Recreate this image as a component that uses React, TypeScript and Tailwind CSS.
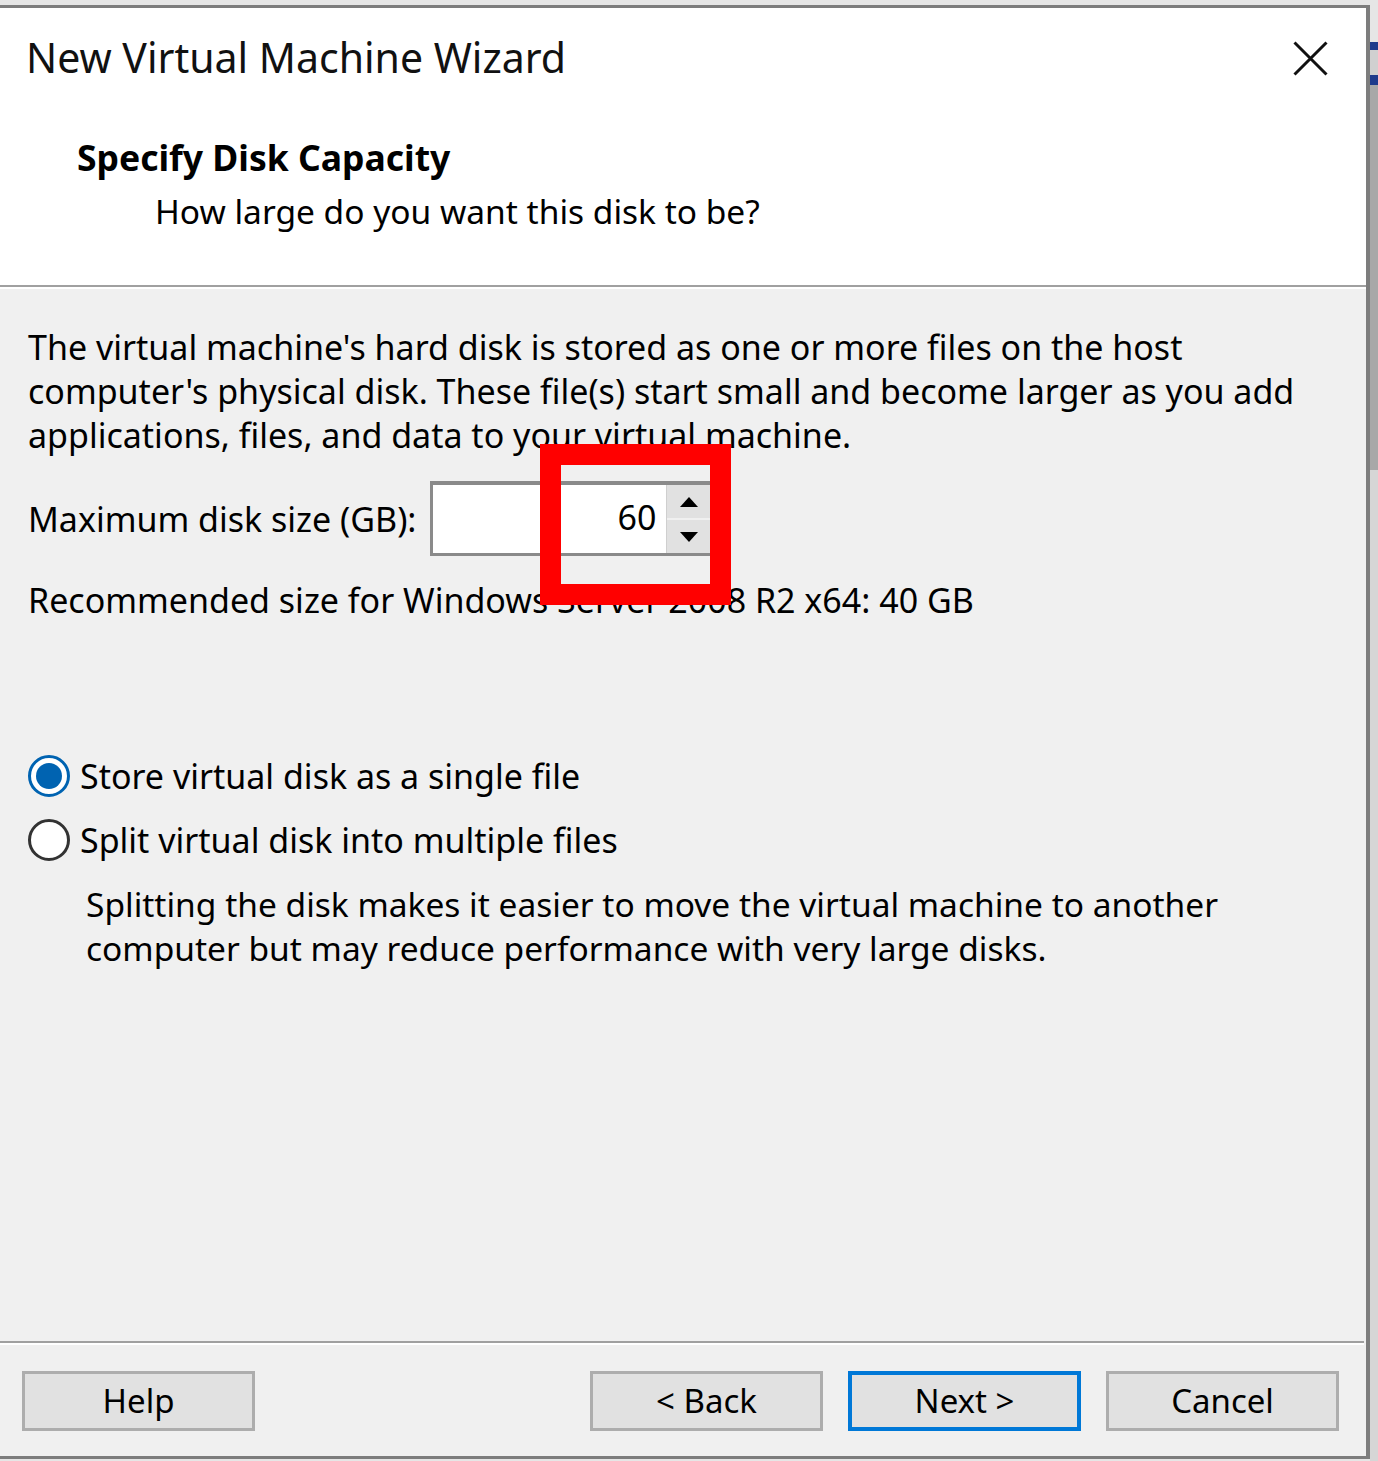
import React from 'react';

const font = { fontFamily: '"Noto Sans", "Open Sans", Arial, sans-serif' };

function Radio({ checked }: { checked: boolean }) {
  return checked ? (
    <span className="w-[42px] h-[42px] rounded-full border-[3px] border-[#0063b1] bg-white flex items-center justify-center shrink-0">
      <span className="w-[26px] h-[26px] rounded-full bg-[#0063b1]" />
    </span>
  ) : (
    <span className="w-[42px] h-[42px] rounded-full border-[3px] border-[#333333] bg-white shrink-0" />
  );
}

function WinButton({ label, primary }: { label: string; primary?: boolean }) {
  return (
    <button
      type="button"
      className={`w-[233px] h-[60px] bg-[#e1e1e1] text-[33px] text-black flex items-center justify-center ${
        primary ? 'border-[4px] border-[#0078d7]' : 'border-[3px] border-[#adadad]'
      }`}
    >
      {label}
    </button>
  );
}

export default function App() {
  return (
    <div className="w-[1378px] h-[1461px] bg-[#e6e6e6] flex pt-[5px] overflow-hidden" style={font}>
      {/* dialog window */}
      <div className="w-[1370px] h-[1454px] flex flex-col border-t-[3px] border-r-[4px] border-b-[3px] border-[#7d7d7d] bg-[#f0f0f0] relative">
        {/* header */}
        <div className="h-[277px] bg-white flex flex-col shrink-0">
          <div className="flex items-center justify-between pl-[26px] pr-[38px] pt-[21px]">
            <div className="text-[41px] leading-[56px] text-[#111]">New Virtual Machine Wizard</div>
            <svg width="35" height="35" viewBox="0 0 35 35" className="mt-[2px]">
              <path d="M1.5 1.5 L33.5 33.5 M33.5 1.5 L1.5 33.5" stroke="#111" strokeWidth="3" />
            </svg>
          </div>
          <div className="pl-[77px] pt-[50px] text-[35.5px] leading-[44px] font-bold text-black">Specify Disk Capacity</div>
          <div className="pl-[155px] pt-[10px] text-[33.5px] leading-[44px] text-black">
            How large do you want this disk to be?
          </div>
        </div>
        <div className="h-[2px] bg-[#a0a0a0] shrink-0" />
        <div className="h-[2px] bg-white shrink-0" />

        {/* body */}
        <div className="flex-1 flex flex-col px-[28px] pt-[36px] text-[34px] leading-[44px] text-black">
          <p className="whitespace-nowrap">
            The virtual machine's hard disk is stored as one or more files on the host
            <br />
            computer's physical disk. These file(s) start small and become larger as you add
            <br />
            applications, files, and data to your virtual machine.
          </p>
          <div className="flex items-center gap-[14px] mt-[24px]">
            <span>Maximum disk size (GB):</span>
            <div className="w-[281px] h-[75px] flex bg-white border-t-[4px] border-l-[3px] border-b-[3px] border-[#8a8a8a] border-r-0">
              <div className="flex-1 flex items-center justify-end pr-[10px] pb-[4px]">60</div>
              <div className="w-[45px] flex flex-col gap-[2px] bg-[#f0f0f0] border-l border-[#cfcfcf]">
                <div className="flex-1 bg-[#e1e1e1] flex items-center justify-center">
                  <svg width="18" height="10" viewBox="0 0 18 10">
                    <path d="M9 0 L18 10 L0 10 Z" fill="#000" />
                  </svg>
                </div>
                <div className="flex-1 bg-[#e1e1e1] flex items-center justify-center">
                  <svg width="18" height="10" viewBox="0 0 18 10">
                    <path d="M0 0 L18 0 L9 10 Z" fill="#000" />
                  </svg>
                </div>
              </div>
            </div>
          </div>
          <div className="mt-[22px]">Recommended size for Windows Server 2008 R2 x64: 40 GB</div>

          <div className="mt-[132px] flex flex-col gap-[20px]">
            <label className="flex items-center gap-[10px]">
              <Radio checked />
              <span>Store virtual disk as a single file</span>
            </label>
            <label className="flex items-center gap-[10px]">
              <Radio checked={false} />
              <span>Split virtual disk into multiple files</span>
            </label>
          </div>
          <p className="pl-[58px] mt-[20px] whitespace-nowrap text-[33.5px]">
            Splitting the disk makes it easier to move the virtual machine to another
            <br />
            computer but may reduce performance with very large disks.
          </p>
        </div>

        {/* footer */}
        <div className="h-[2px] bg-[#a0a0a0] shrink-0 mr-[2px]" />
        <div className="h-[2px] bg-white shrink-0 mr-[2px]" />
        <div className="h-[111px] shrink-0 flex items-start pt-[26px] pl-[22px] pr-[27px]">
          <WinButton label="Help" />
          <div className="flex-1" />
          <div className="flex gap-[25px]">
            <WinButton label="< Back" />
            <WinButton label="Next >" primary />
            <WinButton label="Cancel" />
          </div>
        </div>

        {/* red highlight marker over the spin box */}
        <div className="absolute left-[540px] top-[436px] w-[191px] h-[161px] border-[21px] border-[#ff0000]" />
      </div>

      {/* sliver of the window behind */}
      <div className="w-[8px] flex flex-col">
        <div className="h-[37px]" />
        <div className="h-[8px] bg-[#1f3b8c]" />
        <div className="h-[25px] bg-[#d0d0d0]" />
        <div className="h-[10px] bg-[#1f3b8c]" />
        <div className="h-[385px] bg-[#a8a8a8]" />
        <div className="flex-1 bg-[#d6d6d6]" />
      </div>
    </div>
  );
}
